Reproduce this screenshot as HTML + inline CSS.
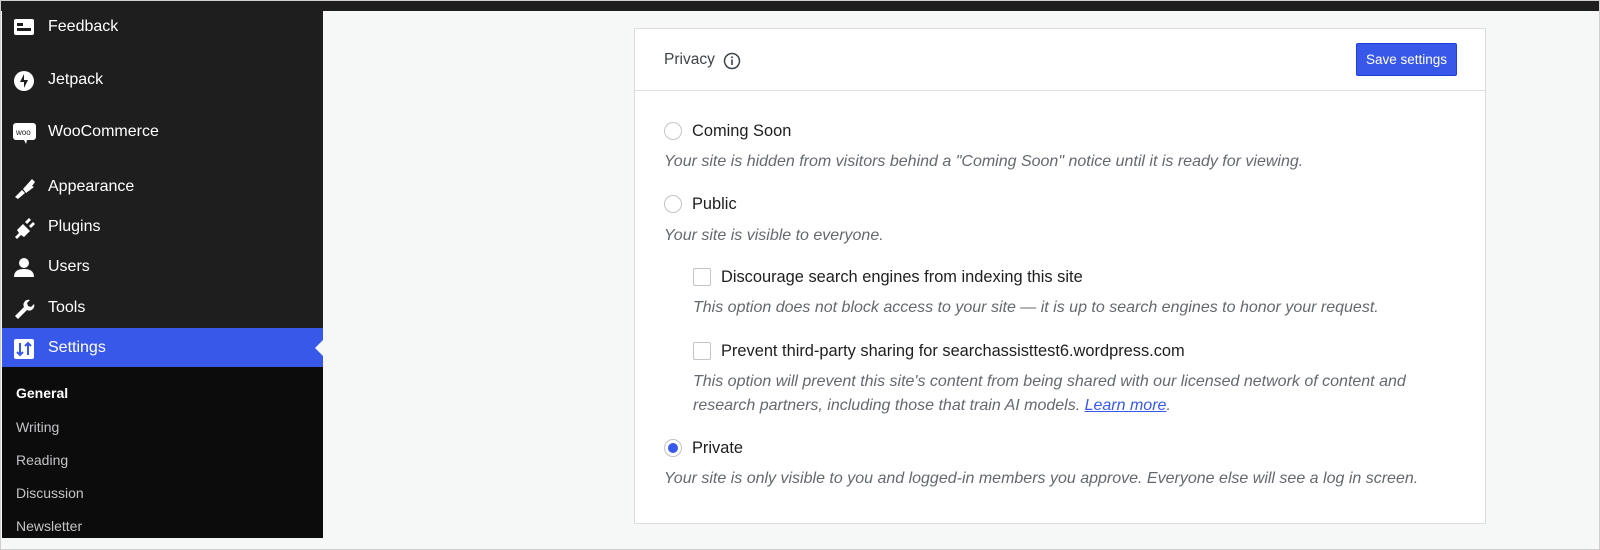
<!DOCTYPE html>
<html><head><meta charset="utf-8"><style>
*{box-sizing:border-box;margin:0;padding:0}
body{width:1600px;height:550px;background:#f6f7f7;font-family:"Liberation Sans",sans-serif;position:relative;overflow:hidden;border:1px solid #cfcfcf}
.top{position:absolute;left:0;top:0;width:1598px;height:10px;background:#1e1e1e}
.side{position:absolute;left:1px;top:10px;width:321px;height:527px;background:#1e1e1e;color:#fff}
.mi{position:absolute;left:0;width:321px;height:40px;font-size:16px;line-height:40px;padding-left:46px}
.mi svg{position:absolute;left:11px;top:10px}
.set{background:#3858e9}
.set:after{content:"";position:absolute;right:0;top:12px;border:8px solid transparent;border-right-color:#f6f7f7}
.sub{position:absolute;left:0;top:356px;width:321px;height:171px;background:#0c0c0c}
.sub div{position:absolute;left:14px;font-size:14px;color:#c3c4c7}
.card{position:absolute;left:633px;top:27px;width:852px;height:496px;background:#fff;border:1px solid #dcdcde}
.hd{height:62px;border-bottom:1px solid #e0e0e0;position:relative}
.hd .t{position:absolute;left:29px;top:22px;font-size:15.5px;color:#3c434a}
.btn{position:absolute;left:721px;top:14px;width:101px;height:33px;background:#3858e9;border:1px solid #1d3fd6;border-radius:2px;color:#fff;font-size:13.5px;line-height:31px;text-align:center}
.r{position:absolute;width:18px;height:18px;border:1px solid #c3c4c7;border-radius:50%}
.c{position:absolute;width:18px;height:18px;border:1px solid #c3c4c7;border-radius:2px}
.l{position:absolute;font-size:16.4px;color:#1e1e1e}
.d{position:absolute;font-size:16px;font-style:italic;color:#646970;line-height:24px;white-space:nowrap}
a{color:#3858e9}
</style></head><body>
<div class="top"></div>
<div class="side">
 <div class="mi" style="top:-4px"><svg width="22" height="20"><rect x="1" y="2" width="20" height="16" rx="2" fill="#fff"/><rect x="4" y="6" width="6" height="3" fill="#1e1e1e"/><rect x="4" y="11" width="14" height="3" fill="#1e1e1e"/></svg>Feedback</div>
 <div class="mi" style="top:49px"><svg width="22" height="22"><circle cx="11" cy="11" r="10" fill="#fff"/><path d="M11 4v8h-4zM11 18v-8h4z" fill="#1e1e1e"/></svg>Jetpack</div>
 <div class="mi" style="top:101px"><svg width="24" height="24"><rect x="0" y="1" width="23" height="17" rx="3" fill="#fff"/><path d="M11 18l2 4 1-4z" fill="#fff"/><text x="3" y="13" font-size="8" fill="#1e1e1e" font-family="Liberation Sans">woo</text></svg>WooCommerce</div>
 <div class="mi" style="top:156px"><svg width="24" height="22"><path d="M2 20l7-7 3 3-7 6zM10 12l9-10 3 3-3 4 2 1-8 6z" fill="#fff"/></svg>Appearance</div>
 <div class="mi" style="top:196px"><svg width="24" height="22"><path d="M2 20l4-4-2-3 6-6 7 7-6 6-3-2-4 4zM12 5l4-4 2 2-4 4zM16 9l4-4 2 2-4 4z" fill="#fff"/></svg>Plugins</div>
 <div class="mi" style="top:236px"><svg width="22" height="22"><circle cx="11" cy="6" r="5" fill="#fff"/><path d="M1 20c0-6 4-8 10-8s10 2 10 8z" fill="#fff"/></svg>Users</div>
 <div class="mi" style="top:277px"><svg width="22" height="22"><path d="M2 18l9-9a5 5 0 016-7l-3 3 1 3 3 1 3-3a5 5 0 01-7 6l-9 9z" fill="#fff"/></svg>Tools</div>
 <div class="mi set" style="top:317px"><svg width="22" height="22"><rect x="1" y="1" width="20" height="20" rx="2" fill="#fff"/><path d="M7 5v12M4 14l3 3 3-3M15 17V5M12 8l3-3 3 3" stroke="#3858e9" stroke-width="2" fill="none"/></svg>Settings</div>
 <div class="sub">
  <div style="top:18px;color:#fff;font-weight:bold">General</div>
  <div style="top:52px">Writing</div>
  <div style="top:85px">Reading</div>
  <div style="top:118px">Discussion</div>
  <div style="top:151px">Newsletter</div>
 </div>
</div>
<div class="card">
 <div class="hd"><span class="t">Privacy</span><svg style="position:absolute;left:88px;top:23px" width="18" height="18"><circle cx="9" cy="9" r="7.5" stroke="#3c434a" stroke-width="1.5" fill="none"/><rect x="8.2" y="7.5" width="1.6" height="5.5" fill="#3c434a"/><circle cx="9" cy="5.3" r="1" fill="#3c434a"/></svg><div class="btn">Save settings</div></div>
 <div class="r" style="left:29px;top:93px"></div><div class="l" style="left:57px;top:93px">Coming Soon</div>
 <div class="d" style="left:29px;top:121px">Your site is hidden from visitors behind a "Coming Soon" notice until it is ready for viewing.</div>
 <div class="r" style="left:29px;top:166px"></div><div class="l" style="left:57px;top:166px">Public</div>
 <div class="d" style="left:29px;top:195px">Your site is visible to everyone.</div>
 <div class="c" style="left:58px;top:239px"></div><div class="l" style="left:86px;top:239px">Discourage search engines from indexing this site</div>
 <div class="d" style="left:58px;top:267px">This option does not block access to your site — it is up to search engines to honor your request.</div>
 <div class="c" style="left:58px;top:313px"></div><div class="l" style="left:86px;top:313px">Prevent third-party sharing for searchassisttest6.wordpress.com</div>
 <div class="d" style="left:58px;top:341px">This option will prevent this site's content from being shared with our licensed network of content and<br>research partners, including those that train AI models. <a href="#">Learn more</a>.</div>
 <div class="r" style="left:29px;top:410px"><div style="position:absolute;left:3px;top:3px;width:10px;height:10px;border-radius:50%;background:#3858e9"></div></div><div class="l" style="left:57px;top:410px">Private</div>
 <div class="d" style="left:29px;top:438px">Your site is only visible to you and logged-in members you approve. Everyone else will see a log in screen.</div>
</div>
</body></html>
